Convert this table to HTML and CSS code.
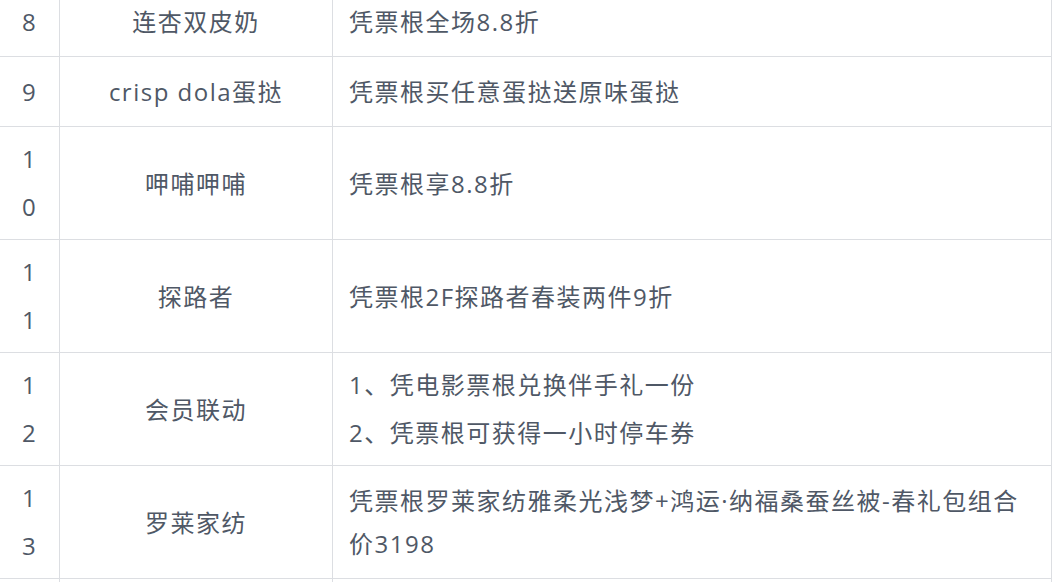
FILE: index.html
```html
<!DOCTYPE html>
<html lang="zh-CN">
<head>
<meta charset="utf-8">
<title>活动优惠</title>
<link rel="stylesheet" href="styles.css">
</head>
<body>
<div class="page">
  <table class="offers">
    <colgroup>
      <col class="c-num">
      <col class="c-shop">
      <col class="c-deal">
    </colgroup>
    <tbody>
      <tr>
        <td class="num">8</td>
        <td class="shop">连杏双皮奶</td>
        <td class="deal">凭票根全场8.8折</td>
      </tr>
      <tr>
        <td class="num">9</td>
        <td class="shop">crisp dola蛋挞</td>
        <td class="deal">凭票根买任意蛋挞送原味蛋挞</td>
      </tr>
      <tr>
        <td class="num">10</td>
        <td class="shop">呷哺呷哺</td>
        <td class="deal">凭票根享8.8折</td>
      </tr>
      <tr>
        <td class="num">11</td>
        <td class="shop">探路者</td>
        <td class="deal">凭票根2F探路者春装两件9折</td>
      </tr>
      <tr>
        <td class="num">12</td>
        <td class="shop">会员联动</td>
        <td class="deal multi">
          <div>1、凭电影票根兑换伴手礼一份</div>
          <div>2、凭票根可获得一小时停车券</div>
        </td>
      </tr>
      <tr>
        <td class="num">13</td>
        <td class="shop">罗莱家纺</td>
        <td class="deal">凭票根罗莱家纺雅柔光浅梦+鸿运·纳福桑蚕丝被-春礼包组合价3198</td>
      </tr>
      <tr class="next">
        <td class="num"></td>
        <td class="shop"></td>
        <td class="deal"></td>
      </tr>
    </tbody>
  </table>
</div>
</body>
</html>
```

FILE: styles.css
```css
html, body {
  margin: 0;
  padding: 0;
  background: #ffffff;
}

body {
  font-family: "Open Sans", "Noto Sans CJK SC", sans-serif;
  font-size: 24px;
  letter-spacing: 1.5px;
  color: #4f5866;
  overflow: hidden;
}

.page {
  margin: -14px 13px 0 -1px;
}

.offers {
  border-collapse: collapse;
  table-layout: fixed;
  width: 1052px;
}

.c-num { width: 60px; }
.c-shop { width: 273px; }
.c-deal { width: 719px; }

.offers td {
  border: 1px solid #dcdee2;
  vertical-align: middle;
  padding: 13px 16px;
  line-height: 43px;
}

.offers td.num {
  text-align: center;
  padding: 8px 16px;
  line-height: 48px;
  word-break: break-all;
}

.offers td.shop {
  text-align: center;
}

.offers td.deal {
  text-align: left;
}

.offers td.multi {
  padding: 8px 16px;
  line-height: 48px;
}

.offers tr.next td {
  height: 69px;
}
```
